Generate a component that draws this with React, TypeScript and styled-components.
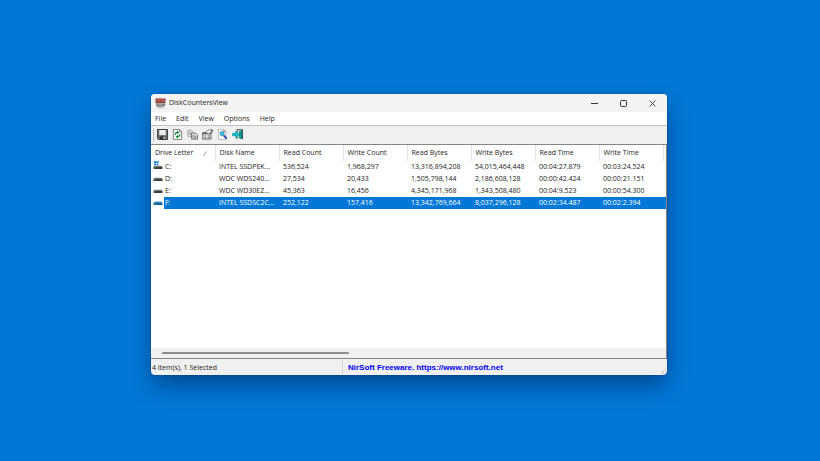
import React, { useState } from 'react';
import styled, { createGlobalStyle } from 'styled-components';

const GlobalStyle = createGlobalStyle`
  * { box-sizing: border-box; }
  body { margin: 0; background: #0078d7; }
  button { border: 0; padding: 0; background: none; font: inherit; color: inherit; }
`;

const Desktop = styled.main`
  display: flex;
  height: 100vh;
  min-height: 240px;
  padding: 94px 153px 86px 151px;
  background: #0078d7;
  font: 7px/12px 'Open Sans', 'Noto Sans', sans-serif;
  color: #1c1c1c;
`;

const AppWindow = styled.section`
  display: flex;
  flex: 1;
  flex-direction: column;
  min-width: 0;
  overflow: hidden;
  border-radius: 4px;
  background: #f0f0f0;
  box-shadow: 0 0 1px 1px rgba(0, 40, 90, 0.2), 0 11px 22px rgba(0, 25, 65, 0.45);
`;

const TitleBar = styled.header`
  display: flex;
  align-items: center;
  flex: 0 0 18px;
  padding-left: 4px;
  background: #f3f3f3;
`;

const Title = styled.h1`
  flex: 1;
  margin: 0;
  padding-left: 3px;
  font-size: 7px;
  font-weight: 400;
`;

const CaptionButton = styled.button`
  display: grid;
  place-items: center;
  width: 29px;
  height: 17px;
`;

const MenuBar = styled.nav`
  display: flex;
  flex: 0 0 14px;
  gap: 10px;
  padding-left: 4px;
  background: #fff;
  border-bottom: 1px solid #c0c0c0;
`;

const MenuItem = styled.button`
  line-height: 13px;
`;

const Toolbar = styled.div`
  display: flex;
  align-items: flex-start;
  flex: 0 0 18px;
  gap: 3px;
`;

const Grip = styled.span`
  width: 2px;
  height: 12px;
  margin: 2px -1px 0 1px;
  border-left: 1px solid #fff;
  border-right: 1px solid #b8b8b8;
`;

const ToolButton = styled.button`
  display: grid;
  place-items: center;
  width: 12px;
  height: 16px;
`;

const ListPane = styled.div`
  display: flex;
  flex: 1;
  flex-direction: column;
  min-height: 0;
  overflow: hidden;
  background: #fff;
  border: solid #858585;
  border-width: 1px 1px 1px 0;
`;

const Table = styled.table`
  width: 100%;
  table-layout: fixed;
  border-collapse: collapse;
  text-align: left;
`;

const HeadCell = styled.th<{ $filler?: boolean }>`
  width: ${(p) => (p.$filler ? 'auto' : '64px')};
  height: 16px;
  padding: 0 0 0 4px;
  border-right: ${(p) => (p.$filler ? '0' : '1px solid #e3e3e3')};
  font-weight: 400;
  vertical-align: middle;
`;

const SortButton = styled.button`
  display: flex;
  align-items: center;
  gap: 10px;
  height: 15px;
`;

const Row = styled.tr<{ $selected: boolean }>`
  height: 12px;
  color: ${(p) => (p.$selected ? '#fff' : '#1c1c1c')};
`;

const Cell = styled.td<{ $selected: boolean }>`
  height: 12px;
  padding: 0 3px 0 4px;
  overflow: hidden;
  white-space: nowrap;
  text-overflow: ellipsis;
  background: ${(p) => (p.$selected ? '#0078d7' : 'transparent')};
`;

const DriveCell = styled.td`
  padding: 0;
`;

const Drive = styled.div`
  display: flex;
  align-items: center;
  gap: 1px;
  padding-left: 2px;
`;

const DriveLabel = styled.span<{ $selected: boolean }>`
  flex: 1;
  padding-left: 1px;
  background: ${(p) => (p.$selected ? '#0078d7' : 'transparent')};
`;

const ScrollTrack = styled.div`
  display: flex;
  align-items: center;
  flex: 0 0 10px;
  margin-top: auto;
  padding: 0 11px;
  background: #f0f0f0;
`;

const ScrollThumb = styled.div`
  width: 38%;
  height: 2px;
  border-radius: 1px;
  background: #8c8c8c;
`;

const StatusBar = styled.footer`
  display: flex;
  align-items: flex-end;
  flex: 0 0 16px;
  padding-left: 1px;
`;

const StatusText = styled.span`
  flex: 0 0 191px;
  height: 15px;
  line-height: 15px;
  border-right: 1px solid #d7d7d7;
`;

const HomeLink = styled.a`
  flex: 1;
  padding-left: 5px;
  color: #0000f0;
  font: bold 8px/15px 'Liberation Sans', Arial, sans-serif;
  text-decoration: none;
`;

const SizeGrip = styled.svg`
  flex: none;
`;

const AppIcon = () => (
  <svg width="11" height="11" viewBox="0 0 11 11" aria-hidden="true">
    <path d="M1 5 10 4.500 10.500 7.500 8 10 3.500 10.500 1 8Z" fill="#a5a5a5" />
    <path d="M1.500 6 5 8.500 9.500 6.500" stroke="#555" strokeWidth=".9" fill="none" />
    <path d="M3 9.500 8.500 8.500" stroke="#eee" strokeWidth=".8" />
    <rect x=".5" y=".5" width="10" height="4.500" fill="#6b3834" />
    <path d="M1.500 1.500h2v2.500h-2zM4.500 1.500h2v2.500h-2zM7.500 1.500h2v2.500h-2z" fill="none" stroke="#ec6a5b" strokeWidth=".7" />
  </svg>
);

const icons: Record<string, React.ReactNode> = {
  Save: (
    <>
      <path d="M.5 .5h11v11H1.500l-1-1z" fill="#777" stroke="#333" />
      <path d="M2.500 1h7v5.500h-7z" fill="#ececec" />
      <path d="M3 8h6v3.500H3z" fill="#333" />
      <path d="M7 8.500h1.500v2.500H7z" fill="#ddd" />
    </>
  ),
  Refresh: (
    <>
      <path d="M1.500 .5H8L10.500 3v8.500h-9z" fill="#fff" stroke="#777" />
      <path d="M8 .5V3h2.500" fill="none" stroke="#555" strokeWidth=".7" />
      <path d="M3.500 6.500C3.500 4.500 4.500 3.700 6 3.700M8.500 5.800C8.500 7.800 7.500 8.500 6 8.500" fill="none" stroke="#139b35" strokeWidth="1.400" />
      <path d="M5.500 1.800v4L8 3.700zM6.500 6.500v4L4 8.500z" fill="#07852a" />
    </>
  ),
  Copy: (
    <>
      <path d="M1 1.500h4L7 3.500V8H1z" fill="#e8e8e8" stroke="#888" strokeWidth=".8" />
      <path d="M2 4h3M2 5.500h4" stroke="#777" strokeWidth=".7" />
      <path d="M5 4.500h4l2.500 2V11H5z" fill="#eee" stroke="#555" strokeWidth=".9" />
      <path d="M6 7h3M6 8.300h4.500M6 9.600h4.500" stroke="#666" strokeWidth=".7" />
    </>
  ),
  Properties: (
    <>
      <path d="M.8 4h9v7h-9z" fill="#f3f3f3" stroke="#555" />
      <path d="M1 5h9" stroke="#555" strokeWidth="1.200" />
      <path d="M2.500 7.500h2M2.500 9.300h2M6 7.500h2.500M6 9.300h2.500" stroke="#555" strokeWidth=".9" />
      <path d="M4 4 6 1.500 8 1h3v2.500L9 4 7.500 5.500 6 5z" fill="#eee" stroke="#555" strokeWidth=".8" />
      <path d="M11 .5v3" stroke="#333" />
    </>
  ),
  Find: (
    <>
      <path d="M1.500 .5h6L10 3v8.500H1.500z" fill="#fff" stroke="#aaa" strokeWidth=".8" />
      <path d="M7.500 .5V3H10" fill="none" stroke="#666" strokeWidth=".7" />
      <circle cx="5.500" cy="5" r="2.300" fill="#35cfee" stroke="#35699a" strokeWidth=".8" />
      <path d="m7.300 7 3.200 3.500" stroke="#1b3fb5" strokeWidth="1.900" />
    </>
  ),
  Exit: (
    <>
      <path d="M5.500 11V.8h6V11" fill="#e8f0f0" stroke="#333" />
      <path d="M7.500 2.500 11 1v10.300L7.500 10z" fill="#0a8d90" />
      <path d="M.3 4.700h3.500V2.300L7.800 6l-4 3.700V7.300H.3z" fill="#00bccc" stroke="#087f8a" strokeWidth=".4" />
    </>
  ),
};

const DriveIcon = ({ kind }: { kind: string }) => (
  <svg width="10" height="12" viewBox="0 0 10 12" aria-hidden="true">
    {kind === 'system' && (
      <path d="M1 0h2v2H1zM3.500 0h2v2h-2zM1 2.500h2v2H1zM3.500 2.500h2v2h-2z" fill="#1685dc" />
    )}
    <path d="M2 4.500h6L9.500 6h-9z" fill={kind === 'selected' ? '#4d9ede' : '#b8b8b8'} />
    <rect x=".5" y="5.500" width="9" height="2.500" rx=".6" fill={kind === 'selected' ? '#17649d' : '#3b3b3b'} />
    <path d="M1.500 6.800h1.500" stroke="#46c06b" strokeWidth=".7" />
  </svg>
);

const columns = ['Drive Letter', 'Disk Name', 'Read Count', 'Write Count', 'Read Bytes', 'Write Bytes', 'Read Time', 'Write Time'];

const drives = [
  ['C:', 'INTEL SSDPEK...', '536,524', '1,968,297', '13,316,894,208', '54,015,464,448', '00:04:27.879', '00:03:24.524'],
  ['D:', 'WDC WDS240...', '27,534', '20,433', '1,505,798,144', '2,186,608,128', '00:00:42.424', '00:00:21.151'],
  ['E:', 'WDC WD30EZ...', '45,363', '16,456', '4,345,171,968', '1,343,508,480', '00:04:9.523', '00:00:54.300'],
  ['F:', 'INTEL SSDSC2C...', '252,122', '157,416', '13,342,769,664', '8,037,296,128', '00:02:34.487', '00:02:2.394'],
];

export default function App() {
  const [selected, setSelected] = useState('F:');

  return (
    <>
      <GlobalStyle />
      <Desktop>
        <AppWindow>
          <TitleBar>
            <AppIcon />
            <Title>DiskCountersView</Title>
            <CaptionButton aria-label="Minimize">
              <svg width="7" height="7"><path d="M0 3.500h7" stroke="#333" /></svg>
            </CaptionButton>
            <CaptionButton aria-label="Maximize">
              <svg width="7" height="7"><rect x=".5" y=".5" width="6" height="6" rx="1" fill="none" stroke="#333" /></svg>
            </CaptionButton>
            <CaptionButton aria-label="Close">
              <svg width="7" height="7"><path d="m.5 .5 6 6m0-6-6 6" stroke="#333" strokeWidth=".9" /></svg>
            </CaptionButton>
          </TitleBar>
          <MenuBar>
            {['File', 'Edit', 'View', 'Options', 'Help'].map((m) => <MenuItem key={m}>{m}</MenuItem>)}
          </MenuBar>
          <Toolbar>
            <Grip />
            {Object.entries(icons).map(([name, art]) => (
              <ToolButton key={name} aria-label={name}>
                <svg width="11" height="11" viewBox="0 0 12 12">{art}</svg>
              </ToolButton>
            ))}
          </Toolbar>
          <ListPane>
            <Table>
              <thead>
                <tr>
                  {columns.map((c, i) => (
                    <HeadCell key={c} scope="col">
                      <SortButton>
                        {c}
                        {i === 0 && <svg width="4" height="5"><path d="M.5 4.500 3.500 .5" stroke="#777" strokeWidth=".8" /></svg>}
                      </SortButton>
                    </HeadCell>
                  ))}
                  <HeadCell $filler aria-hidden="true" />
                </tr>
              </thead>
              <tbody>
                {drives.map(([letter, ...values]) => {
                  const on = selected === letter;
                  return (
                    <Row key={letter} $selected={on} aria-selected={on} onClick={() => setSelected(letter)}>
                      <DriveCell>
                        <Drive>
                          <DriveIcon kind={on ? 'selected' : letter === 'C:' ? 'system' : 'plain'} />
                          <DriveLabel $selected={on}>{letter}</DriveLabel>
                        </Drive>
                      </DriveCell>
                      {values.map((v, i) => <Cell key={i} $selected={on}>{v}</Cell>)}
                      <Cell $selected={on} />
                    </Row>
                  );
                })}
              </tbody>
            </Table>
            <ScrollTrack><ScrollThumb /></ScrollTrack>
          </ListPane>
          <StatusBar>
            <StatusText>4 item(s), 1 Selected</StatusText>
            <HomeLink href="https://www.nirsoft.net">NirSoft Freeware. https://www.nirsoft.net</HomeLink>
            <SizeGrip width="7" height="7" aria-hidden="true">
              <path d="M5 1h1v1H5zM3 3h1v1H3zM5 3h1v1H5zM1 5h1v1H1zM3 5h1v1H3zM5 5h1v1H5z" fill="#aaa" />
            </SizeGrip>
          </StatusBar>
        </AppWindow>
      </Desktop>
    </>
  );
}
